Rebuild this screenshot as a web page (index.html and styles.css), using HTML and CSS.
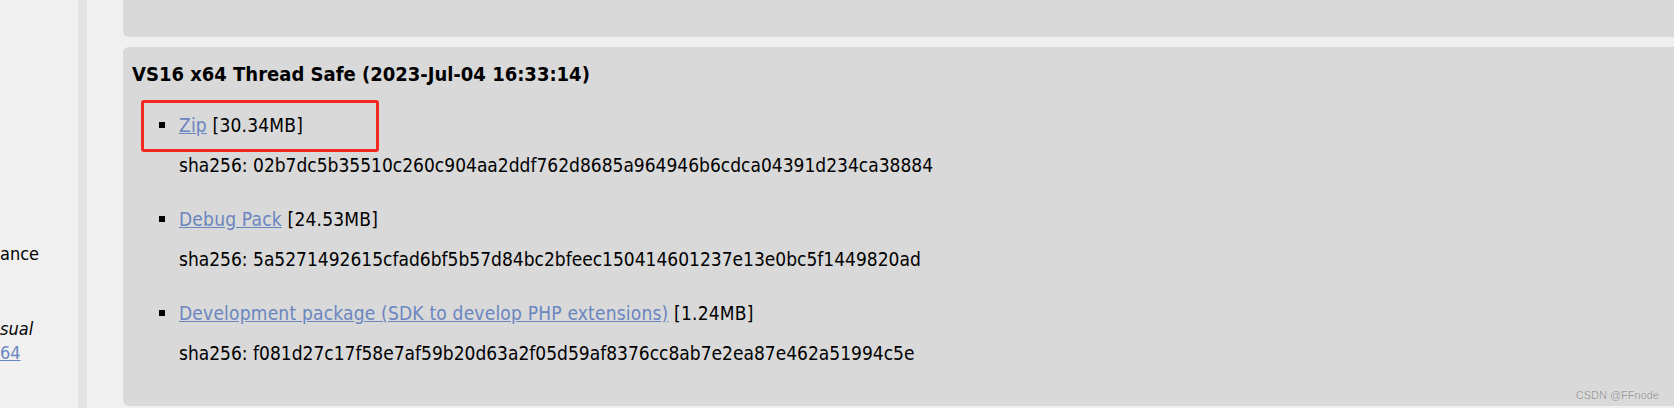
FILE: index.html
```html
<!DOCTYPE html>
<html lang="en">
<head>
<meta charset="utf-8">
<title>PHP Windows downloads</title>
<link rel="stylesheet" href="styles.css">
</head>
<body>
<div class="page">
  <aside class="sidebar">
    <p class="side-line side-first">ance</p>
    <p class="side-line side-italic">sual</p>
    <p class="side-line"><a href="#" class="link">64</a></p>
  </aside>
  <main class="main">
    <section class="card card-top"></section>
    <section class="card card-main">
      <h3 class="build-title">VS16 x64 Thread Safe (2023-Jul-04 16:33:14)</h3>
      <ul class="downloads">
        <li class="download">
          <div class="download-name"><a href="#" class="link">Zip</a> [30.34MB]</div>
          <div class="sha">sha256: 02b7dc5b35510c260c904aa2ddf762d8685a964946b6cdca04391d234ca38884</div>
        </li>
        <li class="download">
          <div class="download-name"><a href="#" class="link">Debug Pack</a> [24.53MB]</div>
          <div class="sha">sha256: 5a5271492615cfad6bf5b57d84bc2bfeec150414601237e13e0bc5f1449820ad</div>
        </li>
        <li class="download">
          <div class="download-name"><a href="#" class="link">Development package (SDK to develop PHP extensions)</a> [1.24MB]</div>
          <div class="sha">sha256: f081d27c17f58e7af59b20d63a2f05d59af8376cc8ab7e2ea87e462a51994c5e</div>
        </li>
      </ul>
      <div class="highlight"></div>
    </section>
  </main>
</div>
<div class="watermark">CSDN @FFnode</div>
</body>
</html>
```

FILE: styles.css
```css
html, body {
  margin: 0;
  height: 408px;
  overflow: hidden;
  background: #f0f0f0;
}

body {
  font-family: "DejaVu Sans", "Noto Sans", sans-serif;
  font-stretch: semi-condensed;
  font-size: 19px;
  line-height: 24px;
  color: #000;
  position: relative;
}

.page {
  display: flex;
  height: 408px;
}

.sidebar {
  width: 78px;
  flex: none;
  border-right: 9px solid #e3e3e3;
  overflow: hidden;
  font-size: 18px;
}

.side-line {
  margin: 0;
  white-space: nowrap;
}

.side-first {
  margin-top: 242px;
}

.side-italic {
  margin-top: 51px;
  font-style: italic;
}

.link {
  color: #6a86c0;
  text-decoration: underline;
}

.main {
  flex: 1;
  padding-left: 36px;
  display: flex;
  flex-direction: column;
  gap: 10px;
}

.card {
  background: #d9d9d9;
  margin-right: -20px;
}

.card-top {
  height: 37px;
  flex: none;
  border-radius: 0 0 6px 6px;
}

.card-main {
  flex: 1;
  margin-bottom: 2px;
  border-radius: 6px;
  padding: 15px 0 0 9px;
  position: relative;
}

.build-title {
  margin: 0;
  font-size: 20px;
  line-height: 24px;
  font-weight: bold;
}

.downloads {
  list-style: none;
  margin: 27px 0 0;
  padding: 0 0 0 47px;
}

.download {
  position: relative;
  margin-bottom: 30px;
}

.download::before {
  content: "";
  position: absolute;
  left: -20px;
  top: 9px;
  width: 6px;
  height: 6px;
  background: #000;
}

.download-name {
  letter-spacing: 0.2px;
}

.sha {
  margin-top: 16px;
}

.highlight {
  position: absolute;
  left: 18px;
  top: 53px;
  width: 238px;
  height: 52px;
  box-sizing: border-box;
  border: 3px solid #f5281f;
  border-radius: 3px;
}

.watermark {
  position: absolute;
  right: 15px;
  bottom: 6px;
  font-family: "Liberation Sans", Arial, sans-serif;
  font-size: 11px;
  line-height: 14px;
  color: #9a9a9a;
  text-shadow: 0 0 1px #fff;
}
```
